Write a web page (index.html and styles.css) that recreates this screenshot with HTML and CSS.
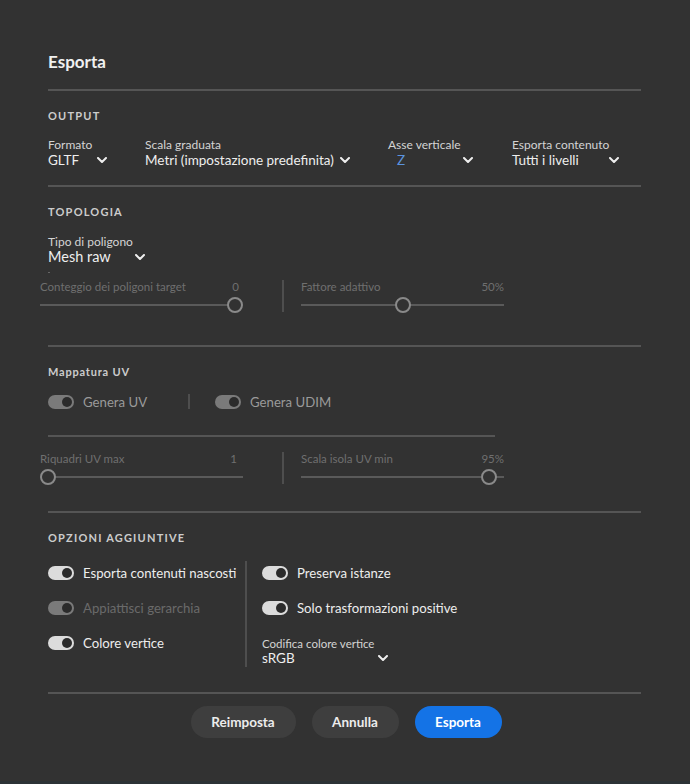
FILE: index.html
```html
<!DOCTYPE html>
<html lang="it">
<head>
<meta charset="utf-8">
<title>Esporta</title>
<link rel="stylesheet" href="styles.css">
</head>
<body>
<div class="dialog">
  <h1 class="title">Esporta</h1>
  <div class="rule"></div>

  <section class="section">
    <h2 class="heading">OUTPUT</h2>
    <div class="output-row">
      <div class="field f-formato">
        <div class="label">Formato</div>
        <div class="dropdown w-formato"><span class="value">GLTF</span><svg class="chev" viewBox="0 0 10 6"><path d="M1 1 L5 5 L9 1"/></svg></div>
      </div>
      <div class="field f-scala">
        <div class="label">Scala graduata</div>
        <div class="dropdown w-scala"><span class="value">Metri (impostazione predefinita)</span><svg class="chev" viewBox="0 0 10 6"><path d="M1 1 L5 5 L9 1"/></svg></div>
      </div>
      <div class="field f-asse">
        <div class="label">Asse verticale</div>
        <div class="dropdown w-asse"><span class="value value-z">Z</span><svg class="chev" viewBox="0 0 10 6"><path d="M1 1 L5 5 L9 1"/></svg></div>
      </div>
      <div class="field">
        <div class="label">Esporta contenuto</div>
        <div class="dropdown w-contenuto"><span class="value">Tutti i livelli</span><svg class="chev" viewBox="0 0 10 6"><path d="M1 1 L5 5 L9 1"/></svg></div>
      </div>
    </div>
  </section>
  <div class="rule"></div>

  <section class="section">
    <h2 class="heading">TOPOLOGIA</h2>
    <div class="field field-topo">
      <div class="label">Tipo di poligono</div>
      <div class="dropdown w-tipo"><span class="value value-lg">Mesh raw</span><svg class="chev" viewBox="0 0 10 6"><path d="M1 1 L5 5 L9 1"/></svg></div>
    </div>
    <div class="tick"></div>
    <div class="slider-row">
      <div class="slider">
        <div class="slider-head"><span>Conteggio dei poligoni target</span><span class="slider-val val-zero">0</span></div>
        <div class="track-wrap"><div class="track track-left"></div><div class="thumb" style="left: 187px"></div></div>
      </div>
      <div class="vsep"></div>
      <div class="slider">
        <div class="slider-head"><span>Fattore adattivo</span><span class="slider-val">50%</span></div>
        <div class="track-wrap"><div class="track"></div><div class="thumb" style="left: 94px"></div></div>
      </div>
    </div>
  </section>
  <div class="rule rule-uv"></div>

  <section class="section">
    <h2 class="heading heading-mixed">Mappatura UV</h2>
    <div class="uv-toggles">
      <label class="opt opt-dim opt-uv"><span class="toggle toggle-dim"></span><span>Genera UV</span></label>
      <div class="small-sep"></div>
      <label class="opt opt-dim"><span class="toggle toggle-dim"></span><span>Genera UDIM</span></label>
    </div>
    <div class="rule rule-short"></div>
    <div class="slider-row slider-row-uv">
      <div class="slider">
        <div class="slider-head"><span>Riquadri UV max</span><span class="slider-val val-one">1</span></div>
        <div class="track-wrap"><div class="track track-riq"></div><div class="thumb" style="left: 0px"></div></div>
      </div>
      <div class="vsep"></div>
      <div class="slider">
        <div class="slider-head"><span>Scala isola UV min</span><span class="slider-val">95%</span></div>
        <div class="track-wrap"><div class="track track-scala"></div><div class="track track-tail"></div><div class="thumb" style="left: 180px"></div></div>
      </div>
    </div>
  </section>
  <div class="rule rule-opz"></div>

  <section class="section">
    <h2 class="heading">OPZIONI AGGIUNTIVE</h2>
    <div class="options">
      <div class="opt-col opt-col-left">
        <label class="opt"><span class="toggle"></span><span>Esporta contenuti nascosti</span></label>
        <label class="opt opt-off"><span class="toggle toggle-dim"></span><span>Appiattisci gerarchia</span></label>
        <label class="opt"><span class="toggle"></span><span>Colore vertice</span></label>
      </div>
      <div class="col-sep"></div>
      <div class="opt-col">
        <label class="opt"><span class="toggle"></span><span>Preserva istanze</span></label>
        <label class="opt"><span class="toggle"></span><span>Solo trasformazioni positive</span></label>
        <div class="field field-codifica">
          <div class="label">Codifica colore vertice</div>
          <div class="dropdown w-srgb"><span class="value">sRGB</span><svg class="chev" viewBox="0 0 10 6"><path d="M1 1 L5 5 L9 1"/></svg></div>
        </div>
      </div>
    </div>
  </section>
  <div class="rule rule-bottom"></div>

  <div class="buttons">
    <button class="btn btn-reset">Reimposta</button>
    <button class="btn btn-cancel">Annulla</button>
    <button class="btn btn-primary">Esporta</button>
  </div>
</div>
<div class="footer-strip"></div>
</body>
</html>
```

FILE: styles.css
```css
html, body {
  margin: 0;
  padding: 0;
  background: #323232;
}
body {
  font-family: Lato, "Open Sans", sans-serif;
  color: #e6e6e6;
  width: 690px;
  height: 784px;
  overflow: hidden;
  position: relative;
}
.dialog {
  padding: 52px 49px 0 48px;
}
.title {
  margin: 0;
  font-size: 17px;
  line-height: 20px;
  font-weight: 700;
  color: #f0f0f0;
}
.rule {
  height: 2px;
  background: #555555;
  margin-top: 17px;
}
.section {
  padding-top: 18px;
}
.heading {
  margin: 0;
  font-size: 11px;
  line-height: 14px;
  font-weight: 700;
  letter-spacing: 1.2px;
  color: #cccccc;
}
.heading-mixed {
  letter-spacing: 0.8px;
}
.output-row {
  display: flex;
  margin-top: 15px;
}
.field {
  display: flex;
  flex-direction: column;
}
.f-formato { width: 97px; }
.f-scala { width: 243px; }
.f-asse { width: 124px; }
.label {
  font-size: 12px;
  line-height: 14px;
  color: #d4d4d4;
}
.dropdown {
  display: flex;
  align-items: center;
  justify-content: space-between;
  height: 16px;
}
.value {
  font-size: 13.5px;
  line-height: 16px;
  color: #eeeeee;
}
.value-lg {
  font-size: 14.5px;
}
.value-z {
  color: #5b93df;
  padding-left: 9px;
}
.chev {
  width: 10px;
  height: 6px;
  flex: none;
}
.chev path {
  fill: none;
  stroke: #eeeeee;
  stroke-width: 2;
  stroke-linecap: round;
  stroke-linejoin: round;
}
.w-formato { width: 59px; }
.w-scala { width: 205px; }
.w-asse { width: 85px; }
.w-contenuto { width: 107px; }
.w-tipo { width: 97px; }
.w-srgb { width: 126px; }

.field-topo {
  margin-top: 16px;
}
.tick {
  width: 2px;
  height: 1px;
  background: #666;
  margin-top: 7px;
}
.slider-row {
  display: flex;
  align-items: center;
  margin-left: -8px;
  margin-top: 7px;
}
.slider {
  width: 203px;
}
.slider-head {
  display: flex;
  justify-content: space-between;
  font-size: 11.5px;
  line-height: 14px;
  color: #6f6f6f;
  white-space: nowrap;
}
.val-zero { padding-right: 4px; }
.val-one { padding-right: 6px; }
.track-wrap {
  position: relative;
  height: 18px;
  margin-top: 2px;
}
.track {
  position: absolute;
  top: 8px;
  left: 0;
  right: 0;
  height: 2px;
  background: #5a5a5a;
}
.track-left { right: 14px; }
.track-riq { left: 15px; }
.track-scala { right: 23px; }
.track-tail { left: 195px; right: 0; }
.thumb {
  position: absolute;
  top: 1px;
  width: 12px;
  height: 12px;
  border: 2px solid #8a8a8a;
  border-radius: 50%;
  background: #323232;
}
.vsep {
  width: 2px;
  height: 32px;
  background: #4e4e4e;
  margin: 0 17px 2px 39px;
  align-self: flex-end;
}
.rule-uv {
  margin-top: 31px;
}
.uv-toggles {
  display: flex;
  align-items: center;
  margin-top: 15px;
}
.opt-uv {
  width: 140px;
}
.small-sep {
  width: 2px;
  height: 15px;
  background: #4e4e4e;
  margin: 0 25px 0 0;
}
.rule-short {
  width: 447px;
  margin-top: 26px;
}
.slider-row-uv {
  margin-top: 15px;
}
.rule-opz {
  margin-top: 25px;
}
.options {
  display: flex;
  margin-top: 16px;
}
.opt-col {
  display: flex;
  flex-direction: column;
  gap: 21px;
  padding-top: 5px;
}
.opt-col-left {
  width: 197px;
}
.col-sep {
  width: 2px;
  height: 106px;
  background: #4e4e4e;
  margin-right: 15px;
}
.opt {
  display: flex;
  align-items: center;
  gap: 9px;
  font-size: 13.2px;
  line-height: 14px;
  color: #ededed;
  white-space: nowrap;
}
.opt-dim { color: #9a9a9a; }
.opt-off { color: #6a6a6a; }
.toggle {
  position: relative;
  width: 26px;
  height: 14px;
  border-radius: 7px;
  background: #dcdcdc;
  flex: none;
}
.toggle::after {
  content: "";
  position: absolute;
  right: 2px;
  top: 2px;
  width: 10px;
  height: 10px;
  border-radius: 50%;
  background: #2b2b2b;
}
.toggle-dim {
  background: #7a7a7a;
}
.field-codifica {
  margin-top: 2px;
}
.field-codifica .label {
  font-size: 11.5px;
  line-height: 12px;
}
.rule-bottom {
  margin-top: 25px;
}
.buttons {
  display: flex;
  justify-content: center;
  gap: 16px;
  margin-top: 12px;
  padding-left: 3px;
}
.btn {
  height: 32px;
  border: none;
  border-radius: 16px;
  font-family: Lato, "Open Sans", sans-serif;
  font-size: 13.5px;
  font-weight: 700;
  color: #ececec;
  background: #3e3e3e;
  padding: 0;
}
.btn-reset { width: 105px; }
.btn-cancel { width: 87px; }
.btn-primary {
  width: 87px;
  background: #1473e6;
  color: #ffffff;
}
.footer-strip {
  position: absolute;
  left: 0;
  right: 0;
  bottom: 0;
  height: 3px;
  background: #2c3236;
}
```
